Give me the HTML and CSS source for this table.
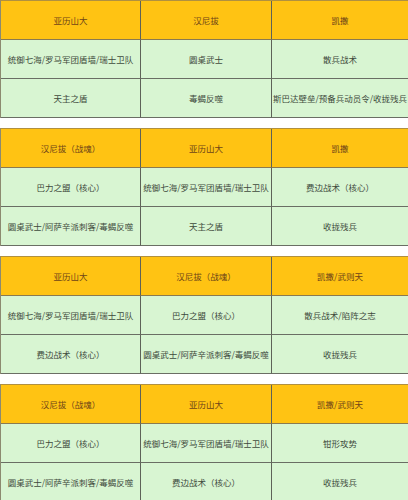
FILE: index.html
```html
<!DOCTYPE html>
<html lang="zh">
<head>
<meta charset="utf-8">
<link rel="stylesheet" href="styles.css">
</head>
<body>
<div class="page">
  <div class="tbl">
    <div class="cell head">亚历山大</div>
    <div class="cell head">汉尼拔</div>
    <div class="cell head last">凯撒</div>
    <div class="cell">统御七海/罗马军团盾墙/瑞士卫队</div>
    <div class="cell">圆桌武士</div>
    <div class="cell last">散兵战术</div>
    <div class="cell">天主之盾</div>
    <div class="cell">毒蝎反噬</div>
    <div class="cell last">斯巴达壁垒/预备兵动员令/收拢残兵</div>
  </div>
  <div class="tbl">
    <div class="cell head">汉尼拔（战魂）</div>
    <div class="cell head">亚历山大</div>
    <div class="cell head last">凯撒</div>
    <div class="cell">巴力之盟（核心）</div>
    <div class="cell">统御七海/罗马军团盾墙/瑞士卫队</div>
    <div class="cell last">费边战术（核心）</div>
    <div class="cell">圆桌武士/阿萨辛派刺客/毒蝎反噬</div>
    <div class="cell">天主之盾</div>
    <div class="cell last">收拢残兵</div>
  </div>
  <div class="tbl">
    <div class="cell head">亚历山大</div>
    <div class="cell head">汉尼拔（战魂）</div>
    <div class="cell head last">凯撒/武则天</div>
    <div class="cell">统御七海/罗马军团盾墙/瑞士卫队</div>
    <div class="cell">巴力之盟（核心）</div>
    <div class="cell last">散兵战术/陷阵之志</div>
    <div class="cell">费边战术（核心）</div>
    <div class="cell">圆桌武士/阿萨辛派刺客/毒蝎反噬</div>
    <div class="cell last">收拢残兵</div>
  </div>
  <div class="tbl">
    <div class="cell head">汉尼拔（战魂）</div>
    <div class="cell head">亚历山大</div>
    <div class="cell head last">凯撒/武则天</div>
    <div class="cell">巴力之盟（核心）</div>
    <div class="cell">统御七海/罗马军团盾墙/瑞士卫队</div>
    <div class="cell last">钳形攻势</div>
    <div class="cell">圆桌武士/阿萨辛派刺客/毒蝎反噬</div>
    <div class="cell">费边战术（核心）</div>
    <div class="cell last">收拢残兵</div>
  </div>
</div>
</body>
</html>
```
FILE: styles.css
```css
html, body {
  margin: 0;
  padding: 0;
  background: #ffffff;
}
.page {
  width: 408px;
  display: flex;
  flex-direction: column;
  gap: 10px;
  font-family: "Noto Sans CJK SC", "Noto Sans", sans-serif;
  font-size: 8.5px;
}
.tbl {
  display: grid;
  grid-template-columns: 140px 131px 137px;
  grid-auto-rows: 39px;
  box-sizing: border-box;
  border-left: 1px solid #8c8a70;
  border-top: 1px solid #b09040;
}
.cell {
  display: flex;
  align-items: center;
  justify-content: center;
  text-align: center;
  box-sizing: border-box;
  border-right: 1px solid #5e6258;
  border-bottom: 1px solid #6a6e64;
  background: #d8f5d2;
  color: #3e4a3c;
  white-space: nowrap;
}
.cell.head {
  background: #ffc313;
  color: #6e4418;
  border-bottom-color: #8a7a50;
}
.cell.last {
  border-right-color: #9aa090;
}
```
